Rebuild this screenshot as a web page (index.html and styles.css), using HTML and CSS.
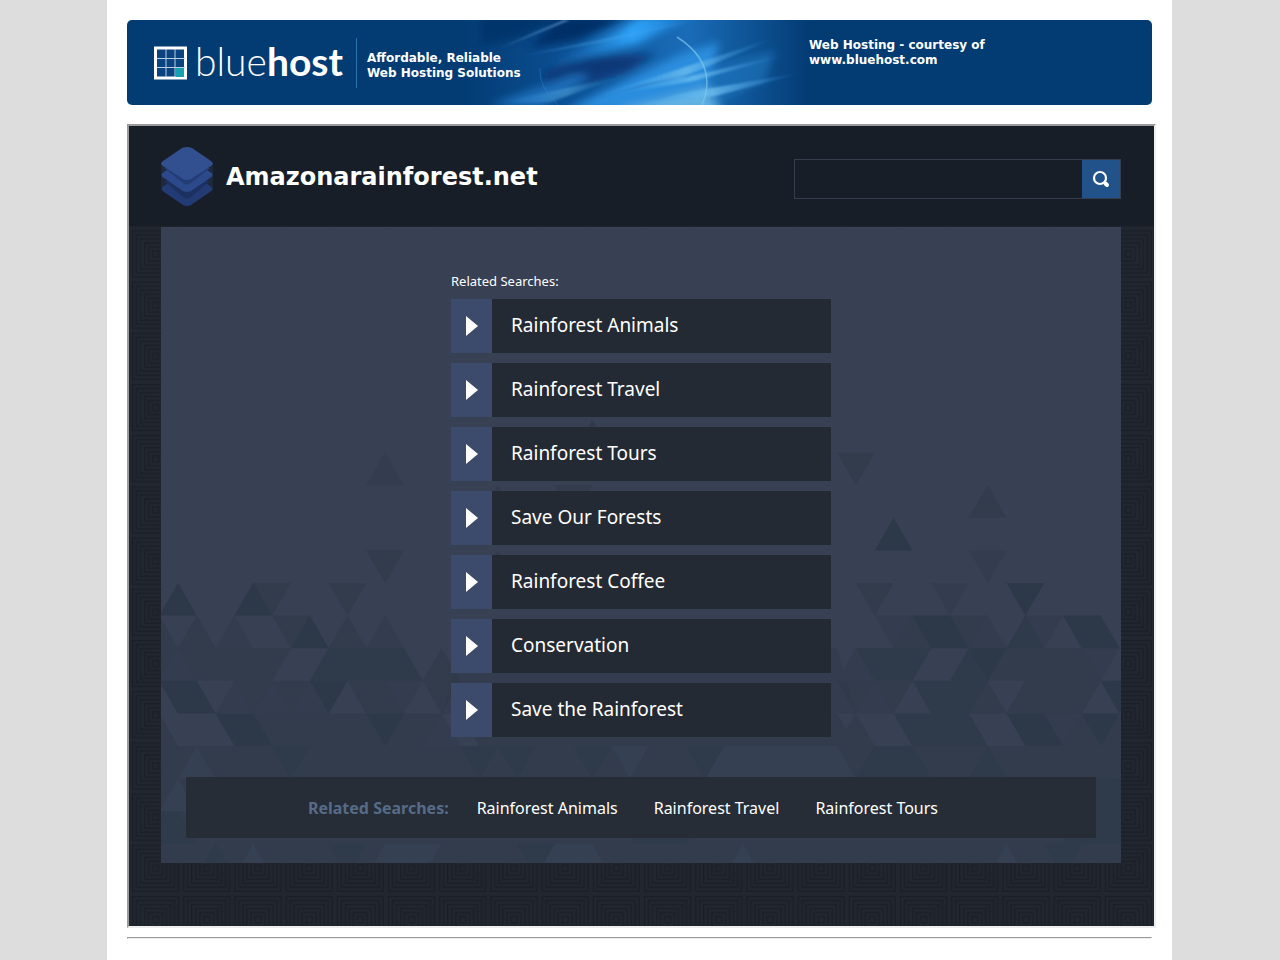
FILE: index.html
```html
<!DOCTYPE html>
<html lang="en">
<head>
    <meta charset="utf-8">
    <title>Amazonarainforest.net</title>
    <link rel="stylesheet" href="styles.css">
</head>
<body>
    <div class="page">
        <div class="banner">
            <svg class="banner-art" width="350" height="85" viewBox="0 0 350 85" aria-hidden="true">
                <defs>
                    <linearGradient id="sky">
                        <stop offset="0" stop-color="#033b73"/>
                        <stop offset=".3" stop-color="#0b4f92"/>
                        <stop offset=".65" stop-color="#1a6cb8"/>
                        <stop offset="1" stop-color="#033b73"/>
                    </linearGradient>
                    <linearGradient id="ray">
                        <stop offset="0" stop-color="#2f9cf0" stop-opacity="0"/>
                        <stop offset=".5" stop-color="#6cbdee" stop-opacity=".8"/>
                        <stop offset="1" stop-color="#2f8fdf" stop-opacity="0"/>
                    </linearGradient>
                    <linearGradient id="streak" gradientUnits="userSpaceOnUse" x1="80" y1="0" x2="220" y2="0">
                        <stop offset="0" stop-color="#1a70c0" stop-opacity="0"/>
                        <stop offset=".65" stop-color="#2ea4fa"/>
                        <stop offset="1" stop-color="#2080d4"/>
                    </linearGradient>
                    <filter id="soft" x="-20%" y="-50%" width="140%" height="200%"><feGaussianBlur stdDeviation="4"/></filter>
                    <filter id="thin" x="-20%" y="-50%" width="140%" height="200%"><feGaussianBlur stdDeviation="1"/></filter>
                </defs>
                <rect width="350" height="85" fill="url(#sky)"/>
                <g filter="url(#soft)">
                    <path d="M20-6h90L60 18 20 26z" fill="#03356c"/>
                    <path d="M102-4h66l-50 24-50 8z" fill="#062f66"/>
                    <path d="M84 52l46-16 66-2-30 18-50 16-30 6z" fill="#0a3878"/>
                    <path d="M80 48l78-38 24-14h50l-50 26-64 18z" fill="url(#streak)"/>
                    <path d="M105 90l116-56 38-12-10 40 0 28z" fill="#2a8ddd"/>
                    <path d="M30 85l82-30 20 0-52 34z" fill="#1c6db8"/>
                    <path d="M150 92l104-26 6 26z" fill="#62b4e4"/>
                    <path d="M245 50l70-20-10 30-55 26z" fill="#1f76c0" opacity=".6"/>
                </g>
                <g filter="url(#thin)">
                    <path d="M130 78L320 16l-100 42z" fill="url(#ray)"/>
                    <path d="M140 76L330 34l-100 28z" fill="url(#ray)"/>
                    <path d="M160 84L345 52l-90 24z" fill="url(#ray)"/>
                    <path d="M44 82L170 54l-80 28z" fill="url(#ray)" opacity=".5"/>
                    <path d="M150 74l98-24-70 16z" fill="#1259a4" opacity=".7"/>
                    <path d="M170 84l90-20-60 14z" fill="#1a69b4" opacity=".6"/>
                    <path d="M40 28L104 0h6z" fill="#5d94c8" opacity=".8"/>
                    <path d="M62 36L236 0l-92 22z" fill="#4ba6ec" opacity=".4"/>
                </g>
                <path d="M217 17q42 27 25 68" fill="none" stroke="#7cc6ee" stroke-width="1.5" opacity=".7"/>
                <path d="M80 48q-2 18 18 37" fill="none" stroke="#3c8fd4" opacity=".4"/>
            </svg>
            <div class="bluehost">
                <svg width="34" height="34" viewBox="0 0 34 34" aria-hidden="true">
                    <rect x="2.500" y="2" width="30" height="30" fill="#0b4280" stroke="#fff" stroke-width="3"/>
                    <path d="M13 3v28M22 3v28M4 12.500h28M4 21.500h28" stroke="#b9cfe4"/>
                    <path d="M23 22h8v9h-8z" fill="#17a0b0"/>
                </svg>
                <span class="wordmark">blue<b>host</b></span>
            </div>
            <div class="slogan">Affordable, Reliable<br>Web Hosting Solutions</div>
            <div class="courtesy">Web Hosting - courtesy of<br>www.bluehost.com</div>
        </div>

        <div class="frame">
            <svg class="texture" width="100%" height="100%" aria-hidden="true">
                <defs>
                    <pattern id="squares" x="1" y="0" width="51.2" height="51.2" patternUnits="userSpaceOnUse">
                        <rect width="52" height="52" fill="#21262f"/>
                        <g fill="none" stroke="#1b1f28" stroke-width="1.5">
                            <rect x="2.500" y="2.500" width="46" height="46"/>
                            <rect x="6.500" y="6.500" width="38" height="38"/>
                            <rect x="10.500" y="10.500" width="30" height="30"/>
                            <rect x="14.500" y="14.500" width="22" height="22"/>
                            <rect x="18.500" y="18.500" width="14" height="14"/>
                            <rect x="22.500" y="22.500" width="6" height="6"/>
                        </g>
                    </pattern>
                </defs>
                <rect width="100%" height="100%" fill="url(#squares)"/>
            </svg>

            <div class="header">
                <div class="header-inner">
                    <svg class="logo" width="52" height="60" viewBox="0 0 52 60" aria-hidden="true">
                        <path d="M0 19h52v23H0z" fill="#23304f" opacity=".6"/>
                        <path d="M3 39L22 26q4-2 8 0l19 13q5 3 0 6L30 58q-4 2-8 0L3 45q-5-3 0-6z" fill="#223b75"/>
                        <path d="M3 34L49 34 30 50q-4 3-8 0z" fill="#1c3160"/>
                        <path d="M3 25L22 12q4-2 8 0l19 13q5 3 0 6L30 44q-4 2-8 0L3 31q-5-3 0-6z" fill="#2c4a8b"/>
                        <path d="M3 21h46L30 36q-4 3-8 0z" fill="#243c74"/>
                        <path d="M2 14L21 1q5-2 10 0l19 13q4 3 0 5L30 32q-4 2-8 0L2 19q-4-2 0-5z" fill="#324f90"/>
                    </svg>
                    <h1>Amazonarainforest.net</h1>
                    <form class="search" action="#">
                        <input type="text" name="q" aria-label="Search">
                        <button type="submit" aria-label="Search">
                            <svg width="18" height="18" viewBox="0 0 18 18" aria-hidden="true">
                                <circle cx="8" cy="8" r="6" fill="none" stroke="#fff" stroke-width="2.200"/>
                                <path d="M13.500 13.500l1.500 1.500" stroke="#fff" stroke-width="4" stroke-linecap="round"/>
                            </svg>
                        </button>
                    </form>
                </div>
            </div>

            <div class="panel">
                <svg class="mosaic" width="960" height="636" viewBox="0 0 960 636" aria-hidden="true">
                    <!-- one unit = half a triangle base across, one row down -->
                    <g transform="translate(17 356) scale(18.83 32.6)" fill="#2b3747">
                        <path opacity=".3" d="M11-4l1 1h-2zM42-1h2l-1 1zM40 0h2l-1 1zM3 1l1 1h-2zM11 1l1 1h-2zM37 1h2l-1 1zM43 1l1 1h-2zM45 1h2l-1 1zM36 2l1 1h-2zM0 2l1 1h-2zM48 2h2l-1 1zM5 3l1 1h-2zM3 3l1 1h-2zM7 3l1 1h-2zM11 3h2l-1 1zM14 4l1 1h-2zM46 4h2l-1 1zM37 3l1 1h-2zM15 2h20l1 2H14z"/>
                        <path opacity=".5" d="M10-1h2l-1 1zM35-4h2l-1 1zM43-3l1 1h-2zM20-3h2l-1 1zM17-3l1 1h-2zM17-1l1 1h-2zM4 0h2l-1 1zM8 0h2l-1 1zM36 0h2l-1 1zM-1 1l1 1h-2zM1 1l1 1h-2zM5 1h2l-1 1zM9 1l1 1h-2zM39 1l1 1h-2zM41 1h2l-1 1zM0 2h6l-1 1H1zM-2 2h2l-1 1zM14 2l1 1h-2zM44 2h4l1 1h-6zM3 3h2l-1 1zM5 3h2l-1 1zM9 3h2l-1 1zM11 3l1 1h-2zM13 3h2l-1 1zM35 3h2l-1 1zM37 3h2l-1 1zM43 3l1 1h-2zM45 3h4l-1 1h-4zM-1 4l1 1h-2zM4 4h6l1 1H5zM12 4h2l-1 1h-2zM15 4h20l1 1H16zM36 4l1 1h-2zM48 4l1 1h-2zM50 4l1 1h-2z"/>
                        <path opacity=".5" d="M-1 5h52v4H-1z"/>
                        <path opacity=".65" d="M22-5l1 1h-2zM8 2h4l1 1H7zM36 2h4l-1 1h-2zM42 2l1 1h-2zM39 3h4l-1 1h-2zM38 4h4l1 1h-4zM45 1l1 1h-2z"/>
                        <path opacity=".8" d="M38-2l1 1h-2zM0 0l1 1h-2zM4 0l1 1H3zM44 0h2l-1 1zM7 1l1 1H6zM39 1h2l1 1h-2zM47 1h2l1 1h-2zM42 2h2l-1 1zM-1 3h2l1 1h-2zM7 3h2l-1 1zM49 3h2l-1 1zM2 4h2l1 1H3zM10 4h2l-1 1zM44 4h2l1 1h-2zM48 4h2l-1 1z"/>
                        <path opacity=".4" d="M5 5h2l-1 1zM15 5h2l-1 1zM17 5h2l-1 1zM21 5h2l-1 1zM27 5h2l-1 1zM37 5h2l1 1h-4zM43 5l1 1h-2zM-1 7h1l1 1h-2zM2 8l1 1H1zM8 8h2l-1 1zM18 8h2l-1 1zM25 7h3l-1 1h-3zM46 8h2l-1 1zM48 6h2l1 2h-4z"/>
                        <path fill="#3b475c" opacity=".4" d="M1 5l1 1H0zM23 5h2l-1 1zM29 5h6l-1 1h-6zM0 6l1 1h-2zM35 5l1 1h-2zM4 8l1 1H3zM11 8h3l-1 1h-3zM20 8h2l1 1h-4zM30 8l1 1h-2zM44 8l1 1h-2z"/>
                    </g>
                </svg>

                <div class="related">
                    <h2>Related Searches:</h2>
                    <ul>
                        <li><a href="#">Rainforest Animals</a></li>
                        <li><a href="#">Rainforest Travel</a></li>
                        <li><a href="#">Rainforest Tours</a></li>
                        <li><a href="#">Save Our Forests</a></li>
                        <li><a href="#">Rainforest Coffee</a></li>
                        <li><a href="#">Conservation</a></li>
                        <li><a href="#">Save the Rainforest</a></li>
                    </ul>
                </div>

                <div class="bottom-bar">
                    <strong>Related Searches:</strong>
                    <a href="#">Rainforest Animals</a>
                    <a href="#">Rainforest Travel</a>
                    <a href="#">Rainforest Tours</a>
                </div>
            </div>
        </div>
        <hr>
    </div>
</body>
</html>
```
FILE: styles.css
```css
* {
    box-sizing: border-box;
}

body {
    margin: 0;
    padding-right: 1px;
    background-color: #ddd;
    font-family: "DejaVu Sans", sans-serif;
}

.page {
    max-width: 1065px;
    min-height: 100vh;
    margin: 0 auto;
    padding: 20px;
    background-color: #fff;
}

/* banner */
.banner {
    position: relative;
    display: flex;
    height: 85px;
    border-radius: 5px;
    overflow: hidden;
    background-color: #033b73;
    color: #fff;
    font-size: 12px;
    font-weight: bold;
    line-height: 15px;
}

.banner-art {
    position: absolute;
    left: 333px;
    top: 0;
}

.bluehost {
    display: flex;
    align-items: center;
    gap: 8px;
    width: 203px;
    margin-left: 26px;
}

.wordmark {
    padding-bottom: 4px;
    font-family: Lato, sans-serif;
    font-size: 39px;
    font-weight: 300;
    line-height: 40px;
}

.wordmark b {
    font-weight: 700;
}

.slogan {
    position: relative;
    width: 442px;
    height: 50px;
    margin-top: 18px;
    padding: 13px 0 0 10px;
    border-left: 1px solid #2a72ae;
}

.courtesy {
    position: relative;
    margin: 18px 0 0 11px;
}

/* parked page */
.frame {
    position: relative;
    box-sizing: content-box;
    width: 100%;
    margin-top: 19px;
    padding-bottom: 63px;
    border: 2px solid;
    border-color: #9a9a9a #eee #eee #9a9a9a;
    background-color: #21262f;
}

.texture {
    position: absolute;
    left: 0;
    top: 0;
}

.header {
    position: relative;
    padding-right: 1px;
    background-color: #181e27;
}

.header-inner {
    display: flex;
    align-items: center;
    max-width: 960px;
    height: 100px;
    margin: 0 auto;
    padding-top: 2px;
}

.header h1 {
    flex: 1;
    margin: 0 0 0 13px;
    color: #fff;
    font-size: 24px;
    line-height: 30px;
}

.search {
    display: flex;
    width: 327px;
    height: 40px;
    margin-top: 4px;
    border: 1px solid #363e4d;
}

.search input {
    flex: 1;
    min-width: 0;
    padding: 0 10px;
    border: none;
    background: none;
    color: #fff;
    font-size: 16px;
}

.search button {
    display: flex;
    align-items: center;
    justify-content: center;
    width: 38px;
    padding: 0;
    border: none;
    background-color: #22528a;
    cursor: pointer;
}

.panel {
    position: relative;
    width: calc(100% - 65px);
    margin: 1px 33px 0 32px;
    padding: 44px 25px 25px;
    overflow: hidden;
    background-color: #384053;
    font-family: "Noto Sans", sans-serif;
}

.mosaic {
    position: absolute;
    left: 0;
    bottom: 0;
}

.panel a {
    color: #fff;
    text-decoration: none;
}

.related {
    position: relative;
    max-width: 380px;
    margin: 0 auto 40px;
}

.related h2 {
    margin: 0 0 8px;
    color: #fff;
    font-size: 13px;
    font-weight: normal;
    line-height: 20px;
}

.related ul {
    display: flex;
    flex-direction: column;
    gap: 10px;
    margin: 0;
    padding: 0;
    list-style: none;
}

.related a {
    display: flex;
    align-items: center;
    height: 54px;
    padding-bottom: 2px;
    background: linear-gradient(to right, #3c4a6b 41px, #242a33 41px);
    font-size: 19px;
    line-height: 52px;
}

.related a::before {
    content: "";
    margin: 2px 33px 0 15px;
    border: solid transparent;
    border-width: 10px 0 10px 12px;
    border-left-color: #fff;
}

.bottom-bar {
    position: relative;
    display: flex;
    align-items: center;
    justify-content: center;
    gap: 36px;
    min-height: 61px;
    padding-right: 36px;
    background-color: #262d36;
    font-size: 16px;
}

.bottom-bar strong {
    margin-right: -8px;
    color: #566b87;
}

hr {
    margin: 9px 0 0;
    border: 1px solid;
    border-color: #9a9a9a #eee #eee #9a9a9a;
}
```
